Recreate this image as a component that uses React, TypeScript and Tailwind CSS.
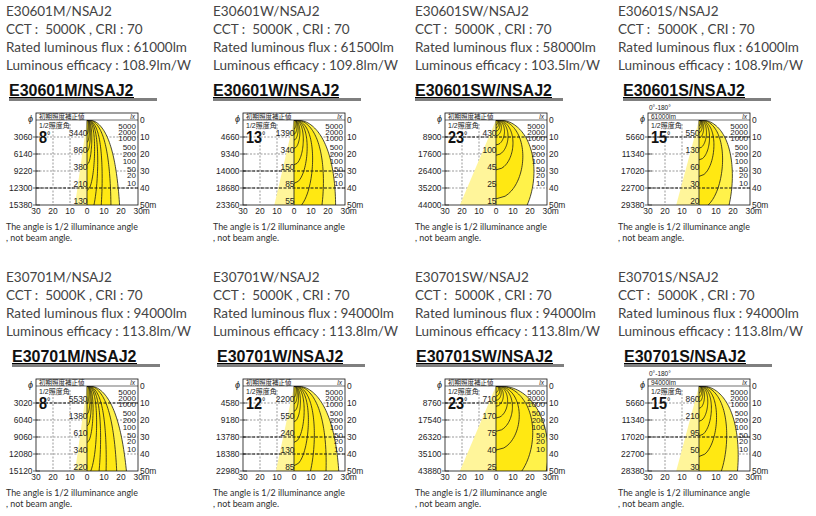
import { useId } from 'react';
import type { ReactNode } from 'react';

type ChartSpec = {
  phi: string[];
  angle: number;
  values: number[];
  spread: number;
  bold: number[];
  lm?: string;
};

type Panel = {
  model: string;
  flux: string;
  efficacy: string;
  titleOffset: string;
  chart: ChartSpec;
};

// chart geometry (px): 17px per 10 m both ways
const S = 1.7;
const BX = 30;
const BY = 12;
const Y0 = BY + 7;
const CX = BX + 51;
const BOTTOM = Y0 + 85;
const LEVELS = [5000, 2000, 1000, 500, 200, 100, 50, 20, 10];
const LEVEL_Y = [9, 15, 21, 30, 37, 44, 52, 58, 66];
const K = 1.3;
const A = Math.pow(2, 1 / K) - 1;

function relIntensity(phi: number, theta: number) {
  const r = phi / theta;
  return Math.pow(1 + A * r * r, -K) * Math.pow(Math.cos(phi), 3);
}

// iso-lux line on the right half, in metres
function isoLux(level: number, e10: number, theta: number, spread: number) {
  const i0 = e10 * 100;
  const zEnd = Math.min(10 * Math.sqrt(e10 / level), 50);
  const pts: [number, number][] = [[0, 0]];
  const n = 48;
  for (let i = 1; i <= n; i++) {
    const z = zEnd * Math.pow(i / n, 1.6);
    const target = (level * z * z) / i0;
    if (target >= 1) {
      pts.push([0, z]);
      continue;
    }
    let lo = 0;
    let hi = Math.PI / 2 - 1e-4;
    for (let j = 0; j < 32; j++) {
      const mid = (lo + hi) / 2;
      if (relIntensity(mid, theta) > target) lo = mid;
      else hi = mid;
    }
    pts.push([z * Math.tan(lo) * spread, z]);
  }
  return { level, pts, zEnd };
}

const px = (x: number) => CX + x * S;
const py = (z: number) => Y0 + z * S;

// slightly condensed chart figures
function Num({
  x,
  y,
  size = 9.8,
  anchor = 'start',
  children,
}: {
  x: number;
  y: number;
  size?: number;
  anchor?: 'start' | 'middle' | 'end';
  children: ReactNode;
}) {
  return (
    <text transform={`translate(${x} ${y}) scale(0.86 1)`} fontSize={size} textAnchor={anchor} fill="#1e1e1e">
      {children}
    </text>
  );
}

function Chart({ c }: { c: ChartSpec }) {
  const clip = 'clip' + useId().replace(/[^a-zA-Z0-9]/g, '');
  const theta = (c.angle * Math.PI) / 180;
  const curves = LEVELS.map((lv) => isoLux(lv, c.values[0], theta, c.spread)).reverse();
  const line = (pts: [number, number][]) =>
    'M ' + pts.map(([x, z]) => `${px(x).toFixed(2)} ${py(z).toFixed(2)}`).join(' L ');
  const coneX = px(-50 * Math.tan(theta));

  return (
    <svg width={156} height={116} className="block" fontFamily="'Liberation Sans', Arial, sans-serif">
      <defs>
        <clipPath id={clip}>
          <rect x={BX} y={Y0} width={102} height={85} />
        </clipPath>
      </defs>

      {c.lm && (
        <text x={BX + 1} y={BY - 3} fontSize={6.5} fill="#222">
          0°-180°
        </text>
      )}

      {/* grid */}
      {[-20, -10].map((x) => (
        <line key={x} x1={px(x)} x2={px(x)} y1={Y0 + 4} y2={BOTTOM} stroke="#555" strokeWidth={0.6} strokeDasharray="2 1.5" />
      ))}
      {[10, 20, 30, 40].map((z) => (
        <line key={z} x1={BX} x2={BX + 102} y1={py(z)} y2={py(z)} stroke="#555" strokeWidth={0.6} strokeDasharray="2 1.5" />
      ))}

      <g clipPath={`url(#${clip})`}>
        <polygon points={`${px(0)},${py(0)} ${coneX},${py(50)} ${px(0)},${py(50)}`} fill="#fff59a" />
        {curves.map((cv, i) => (
          <path
            key={cv.level}
            d={`${line(cv.pts)} L ${px(0)} ${py(cv.zEnd)} Z`}
            fill={i === 0 ? '#fff24a' : '#ffe812'}
          />
        ))}
        {c.bold.map((z) => (
          <line key={z} x1={BX} x2={BX + 102} y1={py(z)} y2={py(z)} stroke="#111" strokeWidth={1.1} strokeDasharray="3 1.5" />
        ))}
        {curves.map((cv) => (
          <path key={cv.level} d={line(cv.pts)} fill="none" stroke="#1a1a1a" strokeWidth={0.8} />
        ))}
        <line x1={px(0)} x2={px(0)} y1={Y0} y2={BOTTOM} stroke="#111" strokeWidth={0.8} />
      </g>

      {/* frame */}
      <rect x={BX} y={BY} width={102} height={92} fill="none" stroke="#111" strokeWidth={0.8} />
      <line x1={BX} x2={BX + 102} y1={Y0} y2={Y0} stroke="#111" strokeWidth={0.6} />
      <text x={BX - 8} y={BY + 9} fontSize={9} fontStyle="italic" fill="#222">
        ϕ
      </text>
      <text
        x={BX + 3}
        y={BY + 6}
        fontSize={6.5}
        fill="#222"
        fontFamily="'Liberation Sans', 'Noto Sans CJK JP', sans-serif"
      >
        {c.lm ?? '初期照度補正値'}
      </text>
      <text x={BX + 99} y={BY + 6} fontSize={6.5} fontStyle="italic" textAnchor="end" fill="#222">
        lx
      </text>
      <text
        x={BX + 3}
        y={Y0 + 8}
        fontSize={7}
        fill="#222"
        fontFamily="'Liberation Sans', 'Noto Sans CJK JP', sans-serif"
      >
        1/2照度角
      </text>
      <text transform={`translate(${BX + 3} ${Y0 + 23}) scale(0.85 1)`} fontSize={17} fontWeight="bold" fill="#111">
        {c.angle}
        <tspan fontSize={10} fontWeight="normal" dy={-4}>
          °
        </tspan>
      </text>

      {/* lx scale */}
      {LEVELS.map((lv, i) => (
        <text key={lv} x={BX + 100} y={Y0 + LEVEL_Y[i]} fontSize={8} textAnchor="end" fill="#1e1e1e">
          {lv}
        </text>
      ))}

      {/* values along the axis */}
      {c.values.map((v, i) => (
        <Num key={i} x={px(0) + 0.5} y={py((i + 1) * 10) - 1.5} anchor="end">
          {v}
        </Num>
      ))}

      {/* left diameter labels */}
      {c.phi.map((p, i) => (
        <g key={p}>
          <line x1={BX - 3} x2={BX + 4} y1={py((i + 1) * 10)} y2={py((i + 1) * 10)} stroke="#222" strokeWidth={0.7} />
          <Num x={BX - 3.5} y={py((i + 1) * 10) + 3.3} anchor="end">
            {p}
          </Num>
        </g>
      ))}

      {/* right distance labels */}
      {[0, 10, 20, 30, 40, 50].map((z) => (
        <Num key={z} x={BX + 104} y={py(z) + 3.3}>
          {z === 50 ? '50m' : z}
        </Num>
      ))}

      {/* bottom lateral labels */}
      {['30', '20', '10', '0', '10', '20'].map((t, i) => (
        <Num key={i} x={BX + i * 17} y={BOTTOM + 9} anchor="middle">
          {t}
        </Num>
      ))}
      <Num x={BX + 97.5} y={BOTTOM + 9}>
        30m
      </Num>
    </svg>
  );
}

const panels: Panel[] = [
  {
    model: 'E30601M/NSAJ2',
    flux: '61000lm',
    efficacy: '108.9lm/W',
    titleOffset: 'ml-[3px]',
    chart: { phi: ['3060', '6140', '9220', '12300', '15380'], angle: 8, values: [3440, 860, 380, 210, 130], spread: 0.95, bold: [40] },
  },
  {
    model: 'E30601W/NSAJ2',
    flux: '61500lm',
    efficacy: '109.8lm/W',
    titleOffset: 'ml-0',
    chart: { phi: ['4660', '9340', '14000', '18680', '23360'], angle: 13, values: [1390, 340, 150, 85, 55], spread: 1.18, bold: [30, 40] },
  },
  {
    model: 'E30601SW/NSAJ2',
    flux: '58000lm',
    efficacy: '103.5lm/W',
    titleOffset: 'ml-0',
    chart: { phi: ['8900', '17600', '26400', '35200', '44000'], angle: 23, values: [430, 100, 45, 25, 15], spread: 1.22, bold: [10] },
  },
  {
    model: 'E30601S/NSAJ2',
    flux: '61000lm',
    efficacy: '108.9lm/W',
    titleOffset: 'ml-[5px]',
    chart: { phi: ['5660', '11340', '17020', '22700', '29380'], angle: 15, values: [550, 130, 60, 30, 20], spread: 1.33, bold: [10, 40], lm: '61000lm' },
  },
  {
    model: 'E30701M/NSAJ2',
    flux: '94000lm',
    efficacy: '113.8lm/W',
    titleOffset: 'ml-[6px]',
    chart: { phi: ['3020', '6040', '9060', '12080', '15120'], angle: 8, values: [5530, 1380, 610, 340, 220], spread: 0.95, bold: [10] },
  },
  {
    model: 'E30701W/NSAJ2',
    flux: '94000lm',
    efficacy: '113.8lm/W',
    titleOffset: 'ml-[4px]',
    chart: { phi: ['4580', '9180', '13780', '18380', '22980'], angle: 12, values: [2200, 550, 240, 130, 85], spread: 1.1, bold: [30, 40] },
  },
  {
    model: 'E30701SW/NSAJ2',
    flux: '94000lm',
    efficacy: '113.8lm/W',
    titleOffset: 'ml-[1px]',
    chart: { phi: ['8760', '17540', '26320', '35100', '43880'], angle: 23, values: [710, 170, 75, 40, 25], spread: 1.3, bold: [10] },
  },
  {
    model: 'E30701S/NSAJ2',
    flux: '94000lm',
    efficacy: '113.8lm/W',
    titleOffset: 'ml-[6px]',
    chart: { phi: ['5660', '11340', '17020', '22700', '28380'], angle: 15, values: [860, 210, 95, 50, 30], spread: 1.25, bold: [30], lm: '94000lm' },
  },
];

function PhotometricPanel({ p }: { p: Panel }) {
  return (
    <div className="flex flex-col">
      <div className="pt-[2px] font-['Lato',sans-serif] text-[13.5px] leading-[18px] text-[#444] whitespace-pre">
        <div>{p.model}</div>
        <div>CCT :  5000K , CRI : 70</div>
        <div>Rated luminous flux : {p.flux}</div>
        <div>Luminous efficacy : {p.efficacy}</div>
      </div>
      <div className={`mt-[11px] flex w-[148px] border-b-[3px] border-[#7f7f7f] ${p.titleOffset}`}>
        <span className="border-b border-black font-['Liberation_Sans',Arial,sans-serif] text-[16px] leading-[12px] font-bold text-[#111]">
          {p.model}
        </span>
      </div>
      <Chart c={p.chart} />
      <div className="mt-[4px] font-['Lato',sans-serif] text-[8.9px] leading-[11px] text-[#2e2e2e]">
        <div>The angle is 1/2 illuminance angle</div>
        <div>, not beam angle.</div>
      </div>
    </div>
  );
}

export default function App() {
  return (
    <div className="w-[816px] h-[516px] overflow-hidden bg-white pl-[6px] grid grid-cols-[207px_202px_203px_198px] grid-rows-[266px_250px]">
      {panels.map((p) => (
        <PhotometricPanel key={p.model} p={p} />
      ))}
    </div>
  );
}
